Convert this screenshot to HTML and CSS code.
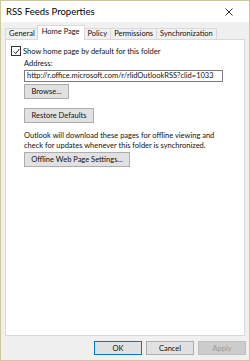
FILE: index.html
```html
<!DOCTYPE html>
<html lang="en">
<head>
    <meta charset="UTF-8">
    <title>RSS Feeds Properties</title>
    <link rel="stylesheet" href="styles.css">
</head>
<body>
    <div class="window">
        <div class="titlebar">
            <span class="title">RSS Feeds Properties</span>
            <svg class="close" width="8" height="8" viewBox="0 0 8 8">
                <path d="M0.5 0.5 L7.5 7.5 M7.5 0.5 L0.5 7.5" stroke="#333" stroke-width="1" fill="none"/>
            </svg>
        </div>
        <div class="tabs">
            <div class="tab">General</div>
            <div class="tab active">Home Page</div>
            <div class="tab">Policy</div>
            <div class="tab">Permissions</div>
            <div class="tab">Synchronization</div>
        </div>
        <div class="panel">
            <label class="check">
                <span class="box">
                    <svg width="7" height="7" viewBox="0 0 7 7">
                        <path d="M0.8 3.6 L2.7 5.6 L6.3 1" stroke="#222" stroke-width="1" fill="none"/>
                    </svg>
                </span>
                Show home page by default for this folder
            </label>
            <div class="group">
                <div class="label">Address:</div>
                <div class="field">http://r.office.microsoft.com/r/rlidOutlookRSS?clid=1033</div>
                <button class="btn browse">Browse...</button>
                <button class="btn restore">Restore Defaults</button>
                <p class="note">Outlook will download these pages for offline viewing and check for updates whenever this folder is synchronized.</p>
                <button class="btn offline">Offline Web Page Settings...</button>
            </div>
        </div>
        <div class="footer">
            <button class="btn ok">OK</button>
            <button class="btn">Cancel</button>
            <button class="btn disabled">Apply</button>
        </div>
    </div>
</body>
</html>
```

FILE: styles.css
```css
/* Dialog window */
body {
    margin: 0;
    font-family: Lato, sans-serif;
    font-size: 7.5px;
    color: #111;
}
.window {
    width: 250px;
    height: 361px;
    box-sizing: border-box;
    border: 1px solid #cdc99c;
    background-color: #f0f0f0;
    display: flex;
    flex-direction: column;
}
.titlebar {
    height: 21px;
    flex-shrink: 0;
    background-color: white;
    display: flex;
    align-items: center;
    justify-content: space-between;
    padding: 0 16px 0 5px;
}
.title {
    font-size: 9.5px;
    color: #000;
}
.tabs {
    display: flex;
    margin: 3px 0 0 4px;
    height: 14px;
    flex-shrink: 0;
    align-items: flex-end;
    position: relative;
    z-index: 1;
}
.tab {
    height: 10px;
    line-height: 10px;
    padding: 0 3px;
    border: 1px solid #d9d9d9;
    border-bottom: none;
    margin-right: -1px;
    background-color: #f0f0f0;
}
.tab.active {
    height: 14px;
    line-height: 12px;
    background-color: white;
    padding: 0 4px;
    margin: 0 -1px 0 -1px;
    position: relative;
    top: 1px;
}
.panel {
    margin: 0 4px;
    height: 289px;
    flex-shrink: 0;
    background-color: white;
    border: 1px solid #d9d9d9;
    padding: 6px 5px 0 5px;
}
.check {
    display: flex;
    align-items: center;
    gap: 2px;
    height: 10px;
}
.box {
    width: 8px;
    height: 8px;
    border: 1px solid #333;
    display: flex;
    align-items: center;
    justify-content: center;
}
.group {
    padding-left: 13px;
    padding-top: 2px;
}
.label {
    height: 11px;
    line-height: 11px;
}
.field {
    width: 195px;
    height: 10px;
    line-height: 10px;
    border: 1px solid #7a7a7a;
    padding-left: 2px;
    margin-top: 1px;
    white-space: nowrap;
    overflow: hidden;
}
.btn {
    display: block;
    font-family: inherit;
    font-size: 7.5px;
    color: #111;
    background-color: #e1e1e1;
    border: 1px solid #adadad;
    height: 15px;
    padding: 0;
    margin: 0;
}
.browse {
    width: 45px;
    margin-top: 2px;
}
.restore {
    width: 70px;
    margin-top: 9px;
}
.note {
    margin: 8px 0 2px 0;
    line-height: 9.5px;
    width: 200px;
}
.offline {
    width: 106px;
}
.footer {
    display: flex;
    justify-content: flex-end;
    gap: 4px;
    padding: 5px 3px 0 0;
}
.footer .btn {
    width: 48px;
    height: 14px;
}
.footer .ok {
    border-color: #0078d7;
}
.footer .disabled {
    background-color: #cccccc;
    border-color: #bfbfbf;
    color: #9a9a9a;
}
```
